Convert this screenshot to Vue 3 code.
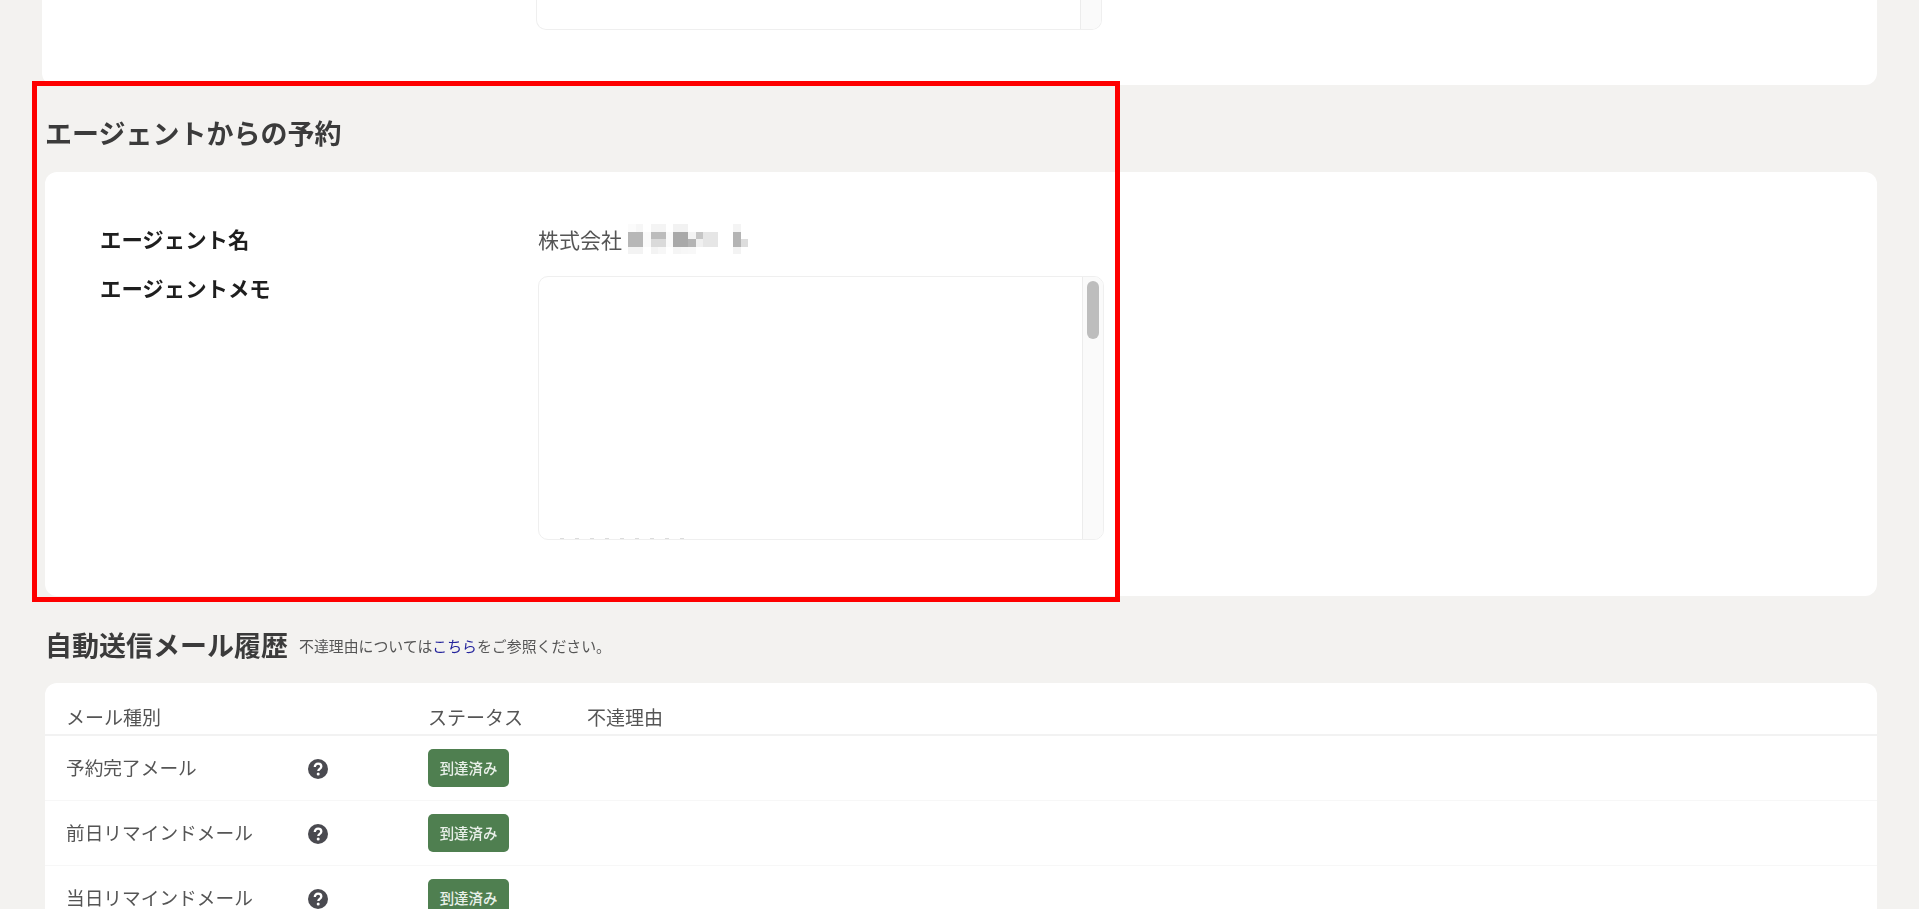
<script setup>
const mails = ["予約完了メール", "前日リマインドメール", "当日リマインドメール"];

// モザイク処理された会社名 (16 マス x 4 段、上下は滲み)
const mosaicCells = [
  "#fbfbfb", "#f6f6f6", "#fff", "#f4f4f4", "#f4f4f4", "#fff", "#f2f2f2", "#f2f2f2",
  "#fff", "#fff", "#fff", "#fff", "#fff", "#fff", "#f4f4f4", "#fff",
  "#b7b7b7", "#b7b7b7", "#fafafa", "#bcbcbc", "#bcbcbc", "#fafafa", "#a9a9a9", "#a9a9a9",
  "#f4f4f4", "#c6c6c6", "#e6e6e6", "#e6e6e6", "#fff", "#fff", "#b4b4b4", "#fff",
  "#b7b7b7", "#b7b7b7", "#fafafa", "#dadada", "#dadada", "#fafafa", "#a9a9a9", "#a9a9a9",
  "#b4b4b4", "#f0f0f0", "#e6e6e6", "#e6e6e6", "#fff", "#fff", "#b4b4b4", "#dddddd",
  "#f3f3f3", "#f3f3f3", "#fff", "#f3f3f3", "#f7f7f7", "#fff", "#f5f5f5", "#f7f7f7",
  "#f8f8f8", "#fff", "#fff", "#fff", "#fff", "#fff", "#f3f3f3", "#fff",
];
</script>

<template>
  <div class="page">
    <div class="content">
      <section class="card card-top">
        <div class="memo memo-top">
          <div class="memo-body"></div>
          <div class="memo-scroll"></div>
        </div>
      </section>

      <h2 class="heading heading-agent">エージェントからの予約</h2>
      <section class="card card-agent">
        <div class="field-label">エージェント名</div>
        <div class="field-value">
          株式会社
          <span class="mosaic">
            <i v-for="(color, i) in mosaicCells" :key="i" :style="{ background: color }"></i>
          </span>
        </div>
        <div class="field-label memo-label">エージェントメモ</div>
        <div class="memo">
          <div class="memo-body"></div>
          <div class="memo-scroll"><div class="thumb"></div></div>
          <span class="memo-clip"></span>
        </div>
      </section>

      <div class="heading-row">
        <h2 class="heading">自動送信メール履歴</h2>
        <p class="note">不達理由については<a href="#">こちら</a>をご参照ください。</p>
      </div>
      <section class="card card-mail">
        <div class="mail-row mail-head">
          <div class="col-name">メール種別</div>
          <div>ステータス</div>
          <div>不達理由</div>
        </div>
        <div v-for="mail in mails" :key="mail" class="mail-row">
          <div>{{ mail }}</div>
          <svg class="help" viewBox="0 0 20 20">
            <circle cx="10" cy="10" r="10" fill="#4a4a50" />
            <path d="M6.8 7.9c0-2 1.4-3.2 3.3-3.2s3.2 1.1 3.2 2.8c0 2.4-3 2.4-3 4.6" fill="none" stroke="#fff" stroke-width="2.3" />
            <circle cx="10.2" cy="15" r="1.5" fill="#fff" />
          </svg>
          <div><span class="badge">到達済み</span></div>
          <div></div>
        </div>
      </section>
    </div>

    <!-- 赤枠の注釈 -->
    <div class="annotation"></div>
  </div>
</template>

<style>
html,
body {
  height: 100%;
  margin: 0;
  overflow: hidden;
}
</style>

<style scoped>
.page {
  position: relative;
  height: 909px;
  overflow: hidden;
  background: #f3f2f0;
  font-family: "Noto Sans CJK JP", "Noto Sans", sans-serif;
  color: #555;
}

.content {
  padding: 0 42px 0 45px;
  filter: blur(0.6px);
}

.card {
  background: #fff;
  border-radius: 12px;
}

.card-top {
  height: 85px;
  margin-left: -3px;
  padding-left: 494px;
  border-radius: 0 0 12px 12px;
  box-sizing: border-box;
}

.memo {
  position: relative;
  display: flex;
  width: 566px;
  height: 264px;
  box-sizing: border-box;
  border: 1px solid #efefef;
  border-radius: 10px;
  overflow: hidden;
}

.memo-top {
  height: 30px;
  border-top: 0;
  border-radius: 0 0 10px 10px;
}

.memo-body {
  flex: 1;
}

.memo-scroll {
  width: 21px;
  box-sizing: border-box;
  padding: 4px 4px 0 4px;
  background: #fafafa;
  border-left: 1px solid #ececec;
}

.thumb {
  height: 58px;
  border-radius: 6px;
  background: #bdbdbd;
}

.memo-clip {
  position: absolute;
  left: 21px;
  bottom: -1px;
  width: 126px;
  height: 2px;
  background: repeating-linear-gradient(90deg, #dcdcdc 0 4px, transparent 4px 15px);
}

.heading {
  margin: 0;
  font-size: 27px;
  line-height: 40px;
  font-weight: 700;
  color: #3b3b3b;
}

.heading-agent {
  padding: 28px 0 19px;
}

.heading-row {
  display: flex;
  align-items: center;
  gap: 11px;
  padding: 29px 0 18px;
}

.note {
  margin: 0;
  font-size: 14.9px;
  color: #555;
}

.note a {
  color: #24249c;
  text-decoration: none;
}

.card-agent {
  display: grid;
  grid-template-columns: 438px 566px;
  grid-template-rows: 32px 264px;
  row-gap: 21px;
  height: 424px;
  box-sizing: border-box;
  padding: 51px 0 0 55px;
}

.field-label {
  font-size: 21.4px;
  line-height: 32px;
  font-weight: 700;
  color: #1e1e1e;
}

.memo-label {
  line-height: 24px;
}

.field-value {
  display: flex;
  align-items: center;
  gap: 6px;
  font-size: 21px;
  color: #555;
}

.mosaic {
  display: grid;
  grid-template-columns: repeat(16, 7.5px);
  grid-auto-rows: 7.5px;
}

.card-mail {
  padding-bottom: 40px;
}

.mail-row {
  display: grid;
  grid-template-columns: 242px 120px 159px 1fr;
  align-items: center;
  height: 65px;
  box-sizing: border-box;
  padding: 0 0 2px 21px;
  border-bottom: 1px solid #f7f7f7;
  font-size: 18.7px;
  line-height: 22px;
  color: #555;
}

.mail-head {
  height: 53px;
  padding: 16px 0 0 21px;
  border-bottom: 2px solid #f2f2f2;
  font-size: 19px;
}

.col-name {
  grid-column: span 2;
}

.help {
  display: block;
  width: 20px;
  height: 20px;
  margin-top: 4px;
}

.badge {
  display: flex;
  align-items: center;
  justify-content: center;
  width: 81px;
  height: 38px;
  margin-top: 2px;
  border-radius: 5px;
  background: #4f7f50;
  color: #e9f0e9;
  font-size: 14.4px;
  font-weight: 500;
}

.annotation {
  position: absolute;
  left: 32px;
  top: 81px;
  width: 1088px;
  height: 521px;
  box-sizing: border-box;
  border: 5px solid #fe0000;
}
</style>
